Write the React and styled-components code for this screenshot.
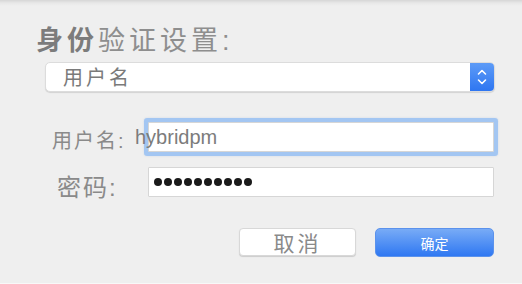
import styled, { createGlobalStyle } from "styled-components";

const GlobalStyle = createGlobalStyle`
  html, body {
    margin: 0;
    padding: 0;
    background: #efefef;
  }
  body {
    font-family: "Liberation Sans", "Noto Sans CJK SC", sans-serif;
  }
`;

export default function App() {
  return (
    <>
      <GlobalStyle />
      <Styled.Page>
        <Styled.Title>
          <Styled.Strong>身份</Styled.Strong>验证设置:
        </Styled.Title>

        <Styled.Select>
          <Styled.SelectText>用户名</Styled.SelectText>
          <Styled.Stepper>
            <svg width="12" height="20" viewBox="0 0 12 20" fill="none">
              <path d="M2.5 7 L6 3.5 L9.5 7" stroke="#fff" strokeWidth="1.6" strokeLinecap="round" strokeLinejoin="round" />
              <path d="M2.5 13 L6 16.5 L9.5 13" stroke="#fff" strokeWidth="1.6" strokeLinecap="round" strokeLinejoin="round" />
            </svg>
          </Styled.Stepper>
        </Styled.Select>

        <Styled.Row $top={26}>
          <Styled.Label $offset={52} $width={92} $size={20} $line={38} $pad={4}>
            用户名:
          </Styled.Label>
          <Styled.Field $focused>
            <Styled.Value>hybridpm</Styled.Value>
          </Styled.Field>
        </Styled.Row>

        <Styled.Row $top={7}>
          <Styled.Label $offset={57} $width={91} $size={24} $line={30} $pad={6}>
            密码:
          </Styled.Label>
          <Styled.Field>
            <Styled.Dots>
              {Array.from({ length: 10 }).map((_, i) => (
                <Styled.Dot key={i} />
              ))}
            </Styled.Dots>
          </Styled.Field>
        </Styled.Row>

        <Styled.Actions>
          <Styled.CancelButton>取消</Styled.CancelButton>
          <Styled.ConfirmButton>确定</Styled.ConfirmButton>
        </Styled.Actions>
      </Styled.Page>
    </>
  );
}

const Styled = {
  Page: styled.div`
    width: 522px;
    height: 284px;
    box-sizing: border-box;
    display: flex;
    flex-direction: column;
    background: linear-gradient(#d6d6d6 0px, #e8e8e8 3px, #efefef 6px);
    border-bottom: 1px solid #f8f8f8;
    overflow: hidden;
  `,

  Title: styled.div`
    margin: 26px 0 0 36px;
    font-size: 27px;
    line-height: 31px;
    letter-spacing: 4px;
    color: #8e8e8e;
    white-space: nowrap;
  `,

  Strong: styled.span`
    font-weight: bold;
    color: #7c7c7c;
  `,

  Select: styled.div`
    margin: 5px 0 0 45px;
    width: 450px;
    height: 30px;
    box-sizing: border-box;
    display: flex;
    align-items: center;
    background: #fff;
    border-radius: 5px;
    border: 1px solid #dcdcdc;
    box-shadow: 0 1px 1px rgba(0, 0, 0, 0.12);
    overflow: hidden;
  `,

  SelectText: styled.span`
    flex: 1;
    padding-left: 17px;
    font-size: 20px;
    letter-spacing: 3px;
    color: #7a7a7a;
    line-height: 28px;
    padding-top: 2px;
  `,

  Stepper: styled.div`
    width: 24px;
    align-self: stretch;
    display: flex;
    align-items: center;
    justify-content: center;
    background: linear-gradient(#5d9bf7, #2e76f1);
  `,

  Row: styled.div`
    margin-top: ${({ $top }) => $top}px;
    display: flex;
    align-items: flex-start;
  `,

  Label: styled.span`
    margin-left: ${({ $offset }) => $offset}px;
    width: ${({ $width }) => $width}px;
    flex-shrink: 0;
    font-size: ${({ $size }) => $size}px;
    line-height: ${({ $line }) => $line}px;
    padding-top: ${({ $pad }) => $pad}px;
    letter-spacing: 2px;
    color: #8a8a8a;
    white-space: nowrap;
  `,

  Field: styled.div`
    margin: ${({ $focused }) => ($focused ? "4px 0 4px 4px" : "0")};
    width: 346px;
    height: 30px;
    box-sizing: border-box;
    display: flex;
    align-items: center;
    background: #fff;
    border: 1px solid #d6d6d6;
    border-radius: 1px;
    box-shadow: ${({ $focused }) =>
      $focused ? "0 0 0 4px #a3c6f2, 0 0 2px 4px rgba(120, 160, 220, 0.3)" : "none"};
  `,

  Value: styled.span`
    position: relative;
    z-index: 1;
    margin-left: -14px;
    font-size: 20px;
    color: #7c7c7c;
    line-height: 26px;
  `,

  Dots: styled.div`
    display: flex;
    gap: 2px;
    margin-left: 5px;
  `,

  Dot: styled.span`
    width: 8px;
    height: 8px;
    border-radius: 50%;
    background: #1a1a1a;
  `,

  Actions: styled.div`
    margin-top: 25px;
    display: flex;
    justify-content: flex-end;
    align-items: flex-start;
    gap: 19px;
    padding-right: 28px;
  `,

  CancelButton: styled.div`
    width: 117px;
    height: 28px;
    box-sizing: border-box;
    display: flex;
    align-items: center;
    justify-content: center;
    background: #fff;
    border: 1px solid #d8d8d8;
    border-radius: 4px;
    box-shadow: 0 1px 1px rgba(0, 0, 0, 0.15);
    font-size: 21px;
    letter-spacing: 3px;
    color: #8a8a8a;
  `,

  ConfirmButton: styled.div`
    width: 119px;
    height: 29px;
    box-sizing: border-box;
    display: flex;
    align-items: center;
    justify-content: center;
    background: linear-gradient(#78abf6, #2f78f2);
    border: 1px solid #5b92ec;
    border-radius: 5px;
    font-size: 14px;
    color: #fff;
  `,
};
